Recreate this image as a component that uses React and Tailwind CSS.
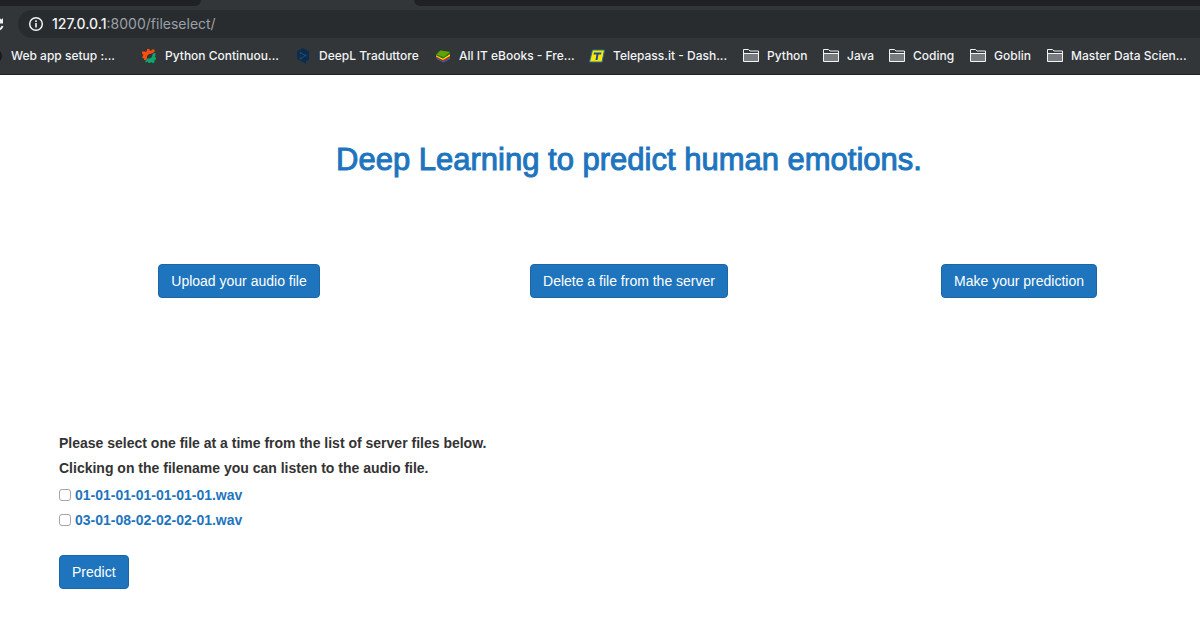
import React from "react";

function ContinuousIcon() {
  return (
    <svg viewBox="0 0 16 16" className="size-4 shrink-0" aria-hidden="true">
      <path d="M6 1h2.500v1.500L10 3l1-1.500h2.500V4L10.500 5.500 8 6 6 8v2.500L4.500 12H3V10.500L1.500 10V8L2.500 7 1 5.500V3.500H3.500L5 4 6 2.500Z" fill="#ff4d0d" />
      <path d="M12 5.500 14.500 5v2.500L13.500 9l1.500.500v2l-1.500.500v2.500l-2 .500L10 14 9 15H7.500L7 13.500 4.500 14.500V12.500L6.500 10.500H9l2-1.500.500-2.500Z" fill="#0aa86c" />
    </svg>
  );
}

function DeepLIcon() {
  return (
    <svg viewBox="0 0 16 16" className="size-4 shrink-0" aria-hidden="true">
      <path d="M8 0 14 3.500v8L11 13.500v2.500L8 14 2 11V3.500Z" fill="#0a2c4e" />
      <path d="m5.500 5 5 2.500-5 3" fill="none" stroke="#294a66" />
      <circle cx="5.500" cy="5" r="1" fill="#294a66" />
      <circle cx="10.500" cy="7.500" r="1" fill="#294a66" />
      <circle cx="5.500" cy="10.500" r="1" fill="#294a66" />
    </svg>
  );
}

function BooksIcon() {
  return (
    <svg viewBox="0 0 16 16" className="size-4 shrink-0" aria-hidden="true">
      <path d="M1.500 9.500 8 13l7-4v2l-6.500 3.500L1.500 11Z" fill="#1673c8" />
      <path d="M1 8l7 3.500L15 8v1.500L8.500 13.500 1.500 10Z" fill="#d91a1a" />
      <path d="M1 6.500 8 10.500 15 6v2l-7 4L1 8.500Z" fill="#ffe000" />
      <path d="M1 6.500 5 2.500l9.500 1L15 6 8 10.500 1 7.500Z" fill="#347d12" />
      <path d="M1.500 6.500 5.500 2.500l9 1.500L9 9Z" fill="#63a30a" />
    </svg>
  );
}

function TelepassIcon() {
  return (
    <svg viewBox="0 0 16 16" className="size-4 shrink-0" aria-hidden="true">
      <path d="M3.500 2h12l-2.500 12H.500Z" fill="#ffe600" stroke="#2373a0" />
      <path d="M5 4.500h7.500l-.5 2H9.500L8.500 12H6.500l1-5.500H4.500Z" fill="#17508d" />
    </svg>
  );
}

function FolderIcon() {
  return (
    <svg viewBox="0 0 16 16" className="size-4 shrink-0" aria-hidden="true">
      <path d="M.5 13.500v-12h5l1.500 1.500h8.500v10.500Z" fill="#34393c" stroke="#f1f3f4" />
      <path d="M1 6h14v7H1Z" fill="#777b7e" />
      <path d="M1 5.500h14" stroke="#f1f3f4" />
    </svg>
  );
}

function GlobeIcon() {
  return (
    <svg viewBox="0 0 16 16" className="size-4 shrink-0" aria-hidden="true">
      <circle cx="8" cy="8" r="7" fill="#171a1c" />
    </svg>
  );
}

const bookmarks = [
  { label: "Web app setup :...", Icon: GlobeIcon, width: "w-[154px]" },
  { label: "Python Continuou...", Icon: ContinuousIcon, width: "w-[154px]" },
  { label: "DeepL Traduttore", Icon: DeepLIcon, width: "w-[140px]" },
  { label: "All IT eBooks - Fre...", Icon: BooksIcon, width: "w-[154px]" },
  { label: "Telepass.it - Dash...", Icon: TelepassIcon, width: "w-[154px]" },
  { label: "Python", Icon: FolderIcon, width: "w-20" },
  { label: "Java", Icon: FolderIcon, width: "w-[66px]" },
  { label: "Coding", Icon: FolderIcon, width: "w-[81px]" },
  { label: "Goblin", Icon: FolderIcon, width: "w-[77px]" },
  { label: "Master Data Scien...", Icon: FolderIcon, width: "w-[154px]" },
];

function BrowserBar() {
  return (
    <header className="border-b border-[#202326] bg-[#323639] font-[Inter,sans-serif]">
      <div className="flex h-1.5 justify-between">
        <div className="w-[201px] rounded-br-md bg-[#202124]" />
        <div className="ml-[213px] flex-1 rounded-bl-md bg-[#202124]" />
      </div>
      <div className="flex items-center gap-3.5 pt-1">
        <button aria-label="Reload" className="flex h-7 w-1 shrink-0 items-center justify-end overflow-hidden">
          <svg viewBox="0 0 14 14" className="size-3.5 shrink-0" aria-hidden="true">
            <path d="M11.500 4A5.500 5.500 0 1 0 12.500 9" fill="none" stroke="#f1f3f4" strokeWidth="2" />
            <path d="M13 1v5.500H8Z" fill="#f1f3f4" />
          </svg>
        </button>
        <div className="flex h-7 flex-1 items-center gap-2 rounded-l-full bg-[#282c2f] pl-2.5">
          <svg viewBox="0 0 16 16" className="size-4 shrink-0" fill="none" stroke="#f1f3f4" aria-hidden="true">
            <circle cx="8" cy="8" r="6.300" strokeWidth="1.500" />
            <path d="M8 7v4.500M8 4.300v1.700" strokeWidth="1.600" />
          </svg>
          <a href="#address" className="text-sm text-[#9aa0a6]">
            <span className="font-medium text-[#f1f3f4]">127.0.0.1</span>:8000/fileselect/
          </a>
        </div>
      </div>
      <nav aria-label="Bookmarks" className="-ml-[13px] flex h-9 items-center overflow-hidden text-xs font-medium text-[#f1f3f4]">
        {bookmarks.map(({ label, Icon, width }, i) => (
          <a key={i} href="#bookmark" className={`flex shrink-0 items-center gap-2 whitespace-nowrap ${width}`}>
            <Icon />
            {label}
          </a>
        ))}
      </nav>
    </header>
  );
}

function ActionButton({ children }) {
  return (
    <button className="rounded border border-[#1b66a4] bg-[#1e75be] px-3 py-1.5 text-sm text-white">
      {children}
    </button>
  );
}

const files = ["01-01-01-01-01-01-01.wav", "03-01-08-02-02-02-01.wav"];

export default function App() {
  return (
    <div className="min-h-screen overflow-x-hidden bg-white font-['Liberation_Sans',Arial,sans-serif] text-[#333]">
      <BrowserBar />
      <main className="-mr-3.5 ml-11 pt-[65px]">
        <h1 className="text-center text-[31px] leading-10 text-[#1e75be] [-webkit-text-stroke:1px_#1e75be]">
          Deep Learning to predict human emotions.
        </h1>
        <div className="grid grid-cols-3 justify-items-center pt-[84px]">
          <ActionButton>Upload your audio file</ActionButton>
          <ActionButton>Delete a file from the server</ActionButton>
          <ActionButton>Make your prediction</ActionButton>
        </div>
        <form className="px-[15px] pt-[135px] text-sm font-bold" onSubmit={(e) => e.preventDefault()}>
          <p className="leading-5">Please select one file at a time from the list of server files below.</p>
          <p className="mt-[5px] leading-5">Clicking on the filename you can listen to the audio file.</p>
          <ul className="mt-[7px] flex flex-col gap-[5px]">
            {files.map((file, i) => (
              <li key={file} className="flex items-center gap-1 leading-5">
                <input
                  id={`file-${i}`}
                  type="checkbox"
                  aria-labelledby={`name-${i}`}
                  className="size-3 appearance-none rounded-[3px] border border-[#a5a5a5] bg-white checked:bg-[#1e75be]"
                />
                <a id={`name-${i}`} href="#audio" className="text-[#1e75be]">{file}</a>
              </li>
            ))}
          </ul>
          <div className="pt-[25px] font-normal">
            <ActionButton>Predict</ActionButton>
          </div>
        </form>
      </main>
    </div>
  );
}
